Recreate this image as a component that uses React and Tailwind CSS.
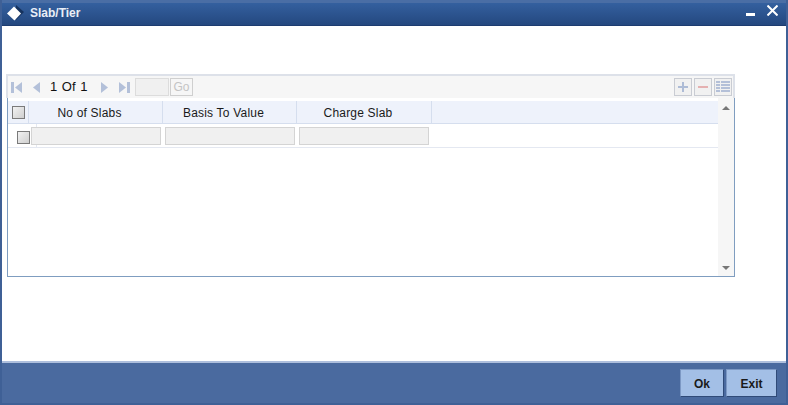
import React from 'react';

const Pager = ({ flip, bar }) => (
  <svg width={bar ? 11 : 7} height="11" viewBox={bar ? '0 0 11 11' : '4 0 7 11'} className={flip ? 'rotate-180' : ''}>
    {bar && <rect x="0" y="0" width="3" height="11" fill="#b3c0d9" />}
    <path d="M11 0 L11 11 L4 5.5 Z" fill="#b3c0d9" />
  </svg>
);

const ToolButton = ({ children }) => (
  <div className="w-[18px] h-[18px] border border-[#c9ccd3] bg-[#f1f1f1] flex items-center justify-center">
    {children}
  </div>
);

const Checkbox = () => (
  <div className="w-[13px] h-[13px] border border-[#7a7a7a] bg-gradient-to-br from-[#f2f2f2] to-[#cfcfcf]" />
);

const Column = ({ label, width }) => (
  <div className={`${width} h-full flex items-center justify-center border-r border-[#d5deee] pr-[12px] pt-[2px] text-[12px] tracking-[0.2px] text-[#1a1a1a]`}>
    {label}
  </div>
);

const EmptyCell = ({ width }) => (
  <div className={`${width} h-[18px] border border-[#d4d4d4] bg-[#f0f0f0]`} />
);

const FooterButton = ({ label, width }) => (
  <div className={`${width} h-[28px] flex items-center justify-center pt-[1px] border border-t-[#7c98c4] border-l-[#7c98c4] border-r-[#2f4a78] border-b-[#2f4a78] bg-[#a3bfe6] text-[12px] font-bold text-[#1a1a1a]`}>
    {label}
  </div>
);

const App = () => {
  return (
    <div className="w-[788px] h-[405px] flex flex-col bg-[#3f6096] border-2 border-t-0 border-[#3f6096] font-['Liberation_Sans',Arial,sans-serif] overflow-hidden">
      {/* title bar */}
      <div className="h-[26px] -mx-[2px] shrink-0 flex items-center pl-[7px] pr-[10px] border-t-[3px] border-b border-t-[#4a6ea5] border-b-[#1d3c70] bg-gradient-to-b from-[#34609f] to-[#24487f]">
        <svg width="17" height="16" viewBox="0 0 17 16" className="shrink-0 -mt-[2px]">
          <path d="M9 0 L17 7 L9 15 Z" fill="#16335f" />
          <path d="M7 1.5 L14 8.5 L7.5 15.5 L0 8.5 Z" fill="#ffffff" />
        </svg>
        <span className="ml-[6px] -mt-[2px] text-[12px] font-bold text-[#e9eef6]">Slab/Tier</span>
        <div className="ml-auto self-start flex items-start gap-[12px]">
          <div className="w-[9px] h-[3px] bg-white mt-[10px]" />
          <svg width="11" height="11" viewBox="0 0 11 11" className="mt-[2px]">
            <path d="M0.5 0.5 L10.5 10.5 M10.5 0.5 L0.5 10.5" stroke="#ffffff" strokeWidth="2" />
          </svg>
        </div>
      </div>

      {/* content */}
      <div className="flex-1 bg-white pt-[48px] pl-[4px] pr-[51px] border-b-2 border-[#aebfdd]">
        <div className="h-[24px] w-[729px] flex items-center border-2 border-b-0 border-[#dde1e9] bg-[#f6f6f6] pl-[3px] pr-[1px]">
          <Pager bar />
          <div className="ml-[11px]"><Pager /></div>
          <span className="ml-[10px] w-[38px] text-[13px] text-[#111] [word-spacing:1px] whitespace-pre">1 Of 1</span>
          <div className="ml-[13px]"><Pager flip /></div>
          <div className="ml-[11px]"><Pager flip bar /></div>
          <div className="ml-[5px] w-[34px] h-[18px] border border-[#dcdcdc] bg-[#f0f0f0]" />
          <div className="ml-[1px] w-[23px] h-[18px] border border-[#cfcfcf] bg-[#f6f6f6] flex items-center justify-center text-[12px] text-[#c4c4c4]">Go</div>
          <div className="ml-auto flex gap-[2px]">
            <ToolButton>
              <svg width="12" height="12" viewBox="0 0 12 12"><path d="M1 6 H11 M6 1 V11" stroke="#aebcd6" strokeWidth="2" /></svg>
            </ToolButton>
            <ToolButton>
              <svg width="12" height="12" viewBox="0 0 12 12"><path d="M1 6 H11" stroke="#e5b1b1" strokeWidth="2" /></svg>
            </ToolButton>
            <ToolButton>
              <svg width="14" height="12" viewBox="0 0 14 12"><path d="M0 1 H4 M5 1 H14 M0 4 H4 M5 4 H14 M0 7 H4 M5 7 H14 M0 10 H4 M5 10 H14" stroke="#b4c0d8" strokeWidth="2" /></svg>
            </ToolButton>
          </div>
        </div>

        <div className="ml-[1px] w-[728px] h-[179px] flex border border-t-0 border-[#7f9dc0] bg-white">
          <div className="flex-1 min-w-0 flex flex-col pt-[3px]">
            <div className="h-[23px] flex items-center bg-[#eef2fb] border-b border-[#d5deee]">
              <div className="w-[21px] h-full flex items-center pl-[4px] border-r border-[#d5deee]"><Checkbox /></div>
              <Column label="No of Slabs" width="w-[134px]" />
              <Column label="Basis To Value" width="w-[134px]" />
              <Column label="Charge Slab" width="w-[135px]" />
            </div>
            <div className="h-[24px] flex items-center border-b border-[#e4e8f1]">
              <div className="w-[29px] h-full shrink-0 flex items-center pl-[9px] pt-[4px] border-r border-[#e4e8f1]"><Checkbox /></div>
              <div className="-ml-[6px] flex gap-[4px] relative">
                <EmptyCell width="w-[130px]" />
                <EmptyCell width="w-[130px]" />
                <EmptyCell width="w-[130px]" />
              </div>
            </div>
          </div>
          <div className="w-[16px] shrink-0 bg-[#f6f6f6] flex flex-col items-center justify-between pt-[8px] pb-[6px]">
            <svg width="8" height="4" viewBox="0 0 8 4"><path d="M4 0 L8 4 H0 Z" fill="#777" /></svg>
            <svg width="8" height="4" viewBox="0 0 8 4"><path d="M0 0 H8 L4 4 Z" fill="#777" /></svg>
          </div>
        </div>
      </div>

      {/* footer */}
      <div className="h-[40px] shrink-0 flex items-start justify-end gap-[2px] pt-[6px] pr-[9px] bg-[#4a6a9f]">
        <FooterButton label="Ok" width="w-[44px]" />
        <FooterButton label="Exit" width="w-[51px]" />
      </div>
    </div>
  );
};

export default App;
